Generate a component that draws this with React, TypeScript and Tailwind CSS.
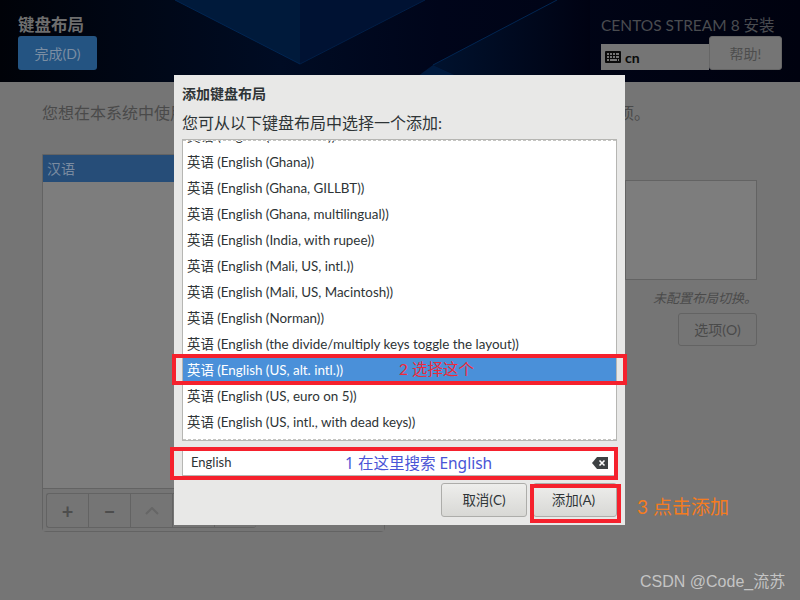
const CJK = '"Lato", "Noto Sans CJK SC", sans-serif';

const rows = [
  "英语 (English (Ghana))",
  "英语 (English (Ghana, GILLBT))",
  "英语 (English (Ghana, multilingual))",
  "英语 (English (India, with rupee))",
  "英语 (English (Mali, US, intl.))",
  "英语 (English (Mali, US, Macintosh))",
  "英语 (English (Norman))",
  "英语 (English (the divide/multiply keys toggle the layout))",
];
const rowsAfter = ["英语 (English (US, euro on 5))", "英语 (English (US, intl., with dead keys))"];

function Row({ text, selected }: { text: string; selected?: boolean }) {
  return (
    <div className={`h-[26px] pl-1 text-[13.4px] leading-[26px] whitespace-nowrap ${selected ? "bg-[#4a90d9] text-white" : "text-[#2e3436]"}`}>
      {text}
    </div>
  );
}

function Header() {
  return (
    <header className="relative h-[82px] overflow-hidden bg-[#000210]">
      <svg className="absolute inset-0" width="800" height="82" viewBox="0 0 800 82">
        <defs>
          <linearGradient id="g1" x1="0" x2="1" y1="0" y2="0">
            <stop offset="0" stopColor="#000208" />
            <stop offset="0.35" stopColor="#000c24" />
            <stop offset="0.55" stopColor="#00051a" />
            <stop offset="1" stopColor="#00020f" />
          </linearGradient>
          <linearGradient id="g2" x1="0" x2="1" y1="0" y2="0">
            <stop offset="0" stopColor="#00122e" />
            <stop offset="1" stopColor="#000212" />
          </linearGradient>
        </defs>
        <rect width="800" height="82" fill="url(#g1)" />
        <polygon points="175,0 300,64 300,0" fill="#001a3b" />
        <polygon points="300,0 300,64 425,0" fill="#001233" />
        <polygon points="433,65 557,0 590,0 590,82 470,82" fill="url(#g2)" />
        <polygon points="433,65 470,82 410,82" fill="#001a3e" />
        <line x1="175" y1="0" x2="300" y2="64" stroke="#012652" />
        <line x1="300" y1="64" x2="425" y2="0" stroke="#011f47" />
        <line x1="433" y1="65" x2="557" y2="0" stroke="#012652" />
      </svg>
      <div className="relative flex justify-between pl-[18px] pr-[18px] pt-[14px]">
        <div>
          <h1 className="text-[16.5px] font-bold leading-[22px] text-[#6e6e6e]">键盘布局</h1>
          <button className="h-[34px] w-[79px] rounded-[3px] bg-[#245482] text-[14px] text-[#7b8ea3]">完成(D)</button>
        </div>
        <div className="flex w-[181px] flex-col items-end">
          <div className="h-[22px] w-full whitespace-nowrap text-[15.5px] leading-[22px] text-[#4a4c50]">CENTOS STREAM 8 安装</div>
          <div className="flex h-[34px] w-full items-end">
            <div className="flex h-[26px] flex-1 items-center gap-[4px] bg-[#757575] pl-[4px] text-[14px] font-bold text-[#0a0a0a]">
              <svg width="16" height="12" viewBox="0 0 16 12" fill="#0a0a0a">
                <path fillRule="evenodd" d="M1 0h14a1 1 0 0 1 1 1v10a1 1 0 0 1-1 1H1a1 1 0 0 1-1-1V1a1 1 0 0 1 1-1zM2 2v2h2V2zm3 0v2h2V2zm3 0v2h2V2zm3 0v2h3V2zM2 5v2h2V5zm3 0v2h2V5zm3 0v2h2V5zm3 0v2h3V5zM2 8v2h2V8zm3 0v2h7V8zm8 0v2h1V8z" />
              </svg>
              cn
            </div>
            <button className="h-[34px] w-[73px] rounded-[3px] border border-[#666] bg-[#757575] text-[14px] text-[#4d4d4d]">帮助!</button>
          </div>
        </div>
      </div>
    </header>
  );
}

function Background() {
  return (
    <main className="h-[518px] bg-[#757575] pl-[42px] pr-[43px] pt-[22px] text-[#4a4a4a]">
      <p className="h-[50px] whitespace-nowrap text-[16px] leading-[18px]">您想在本系统中使用哪些键盘布局？您可以将任意布局移动到顶部来设置为默认选项。</p>
      <div className="flex justify-between">
        <section className="flex h-[378px] w-[343px] flex-col rounded-b-[4px] border border-[#636363] bg-[#7d7d7d]">
          <div className="h-[27px] bg-[#264d78] pl-1 text-[14px] leading-[27px] text-[#7a8ba0]">汉语</div>
          <div className="flex-1" />
          <div className="flex h-[43px] border-t border-[#636363] bg-[#757575] pl-[3px] pt-[4px]">
            <div className="flex h-[35px] text-[#4d4d4d]">
              {["+", "−", "", "", ""].map((s, i) => (
                <div key={i} className={`flex w-[42px] items-center justify-center border border-r-0 border-[#636363] text-[20px] font-bold ${i === 0 ? "rounded-l-[3px]" : ""} ${i === 4 ? "rounded-r-[3px] border-r" : ""} ${i > 1 ? "text-[#666]" : ""}`}>
                  {i < 2 ? s : null}
                  {i === 2 && (
                    <svg width="14" height="8" viewBox="0 0 14 8" fill="none" stroke="currentColor" strokeWidth="2"><path d="M1 7l6-6 6 6" /></svg>
                  )}
                </div>
              ))}
            </div>
          </div>
        </section>
        <aside className="flex w-[132px] flex-col items-end pt-[26px]">
          <div className="h-[100px] w-full border border-[#636363] bg-[#7d7d7d]" />
          <p className="mt-[10px] h-[23px] text-[13px] italic leading-[16px] text-[#4a4a4a]">未配置布局切换。</p>
          <button className="h-[33px] w-[79px] rounded-[3px] border border-[#636363] bg-[#757575] text-[14px] text-[#4a4a4a]">选项(O)</button>
        </aside>
      </div>
    </main>
  );
}

function Dialog() {
  return (
    <div className="absolute left-[174px] top-[75px] flex h-[450px] w-[451px] flex-col bg-[#e8e8e7] px-2 text-[#2e3436]">
      <h2 className="h-[31px] pt-[9px] text-[14px] font-bold leading-[20px]">添加键盘布局</h2>
      <p className="h-[33px] text-[16px] leading-[33px]">您可从以下键盘布局中选择一个添加:</p>
      <div className="relative h-[302px] w-[435px] overflow-hidden border border-[#b6b6b3] bg-white">
        <div className="-mt-[17px]">
          <Row text="英语 (English (Australian))" />
          {rows.map((r) => <Row key={r} text={r} />)}
          <Row text="英语 (English (US, alt. intl.))" selected />
          {rowsAfter.map((r) => <Row key={r} text={r} />)}
        </div>
        <div className="absolute inset-x-0 top-0 border-t border-dashed border-[#c4c4c1] bg-white" />
        <div className="absolute inset-x-0 bottom-0 h-[3px] border-b border-dashed border-[#c4c4c1] bg-white" />
      </div>
      <div className="mt-[8px] flex h-[27px] w-[435px] items-center justify-between border border-[#b6b6b3] bg-white pl-2 pr-[8px]">
        <span className="pt-[1px] text-[13px] text-[#2e3436]">English</span>
        <svg width="16" height="12" viewBox="0 0 16 12">
          <path d="M5 0h11v12H5L0 6z" fill="#3d4143" />
          <path d="M7.5 3.5l5 5m0-5l-5 5" stroke="#fff" strokeWidth="1.6" />
        </svg>
      </div>
      <div className="mt-[7px] flex justify-end gap-[6px]">
        <button className="h-[34px] w-[86px] rounded-[3px] border border-[#adadaa] bg-gradient-to-b from-[#eeeeec] to-[#d8d8d5] pt-[1px] text-[13.5px]">取消(C)</button>
        <button className="h-[34px] w-[84px] rounded-[3px] border border-[#adadaa] bg-gradient-to-b from-[#eeeeec] to-[#d8d8d5] pr-[3px] pt-[1px] text-[13.5px]">添加(A)</button>
      </div>
    </div>
  );
}

export default function App() {
  return (
    <div className="relative h-[600px] w-[800px] overflow-hidden" style={{ fontFamily: CJK }}>
      <Header />
      <Background />
      <Dialog />
      {/* annotations */}
      <div className="absolute left-[172px] top-[354px] h-[31px] w-[455px] border-[4px] border-[#f5212d]" />
      <div className="absolute left-[170px] top-[447px] h-[33px] w-[448px] border-[4px] border-[#f5212d]" />
      <div className="absolute left-[530px] top-[484px] h-[39px] w-[91px] border-[4px] border-[#f5212d]" />
      <span className="absolute left-[399px] top-[358px] whitespace-nowrap text-[15.5px] leading-[22px] text-[#ee2a3a]">2 选择这个</span>
      <span className="absolute left-[345px] top-[452px] whitespace-nowrap text-[15.5px] leading-[22px] text-[#4a55d6]" style={{ fontFamily: '"Noto Sans", "Noto Sans CJK SC", sans-serif' }}>1 在这里搜索 English</span>
      <span className="absolute left-[637px] top-[494px] whitespace-nowrap text-[19px] leading-[26px] text-[#f57c1f]">3 点击添加</span>
      <span className="absolute left-[640px] top-[570px] whitespace-nowrap text-[16px] leading-[24px] text-[#c4c4c4]" style={{ fontFamily: '"Liberation Sans", "Noto Sans CJK SC", sans-serif' }}>CSDN @Code_流苏</span>
    </div>
  );
}
